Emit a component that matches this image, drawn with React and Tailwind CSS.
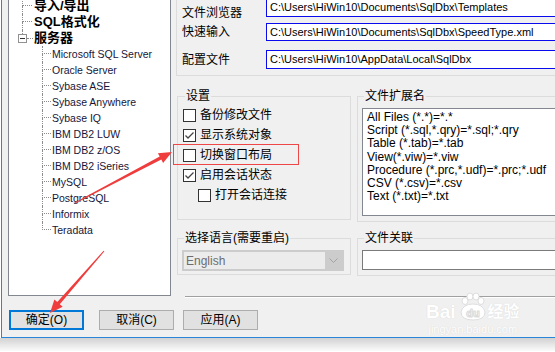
import React from 'react';

const servers = [
  'Microsoft SQL Server',
  'Oracle Server',
  'Sybase ASE',
  'Sybase Anywhere',
  'Sybase IQ',
  'IBM DB2 LUW',
  'IBM DB2 z/OS',
  'IBM DB2 iSeries',
  'MySQL',
  'PostgreSQL',
  'Informix',
  'Teradata',
];

const paths = [
  'C:\\Users\\HiWin10\\Documents\\SqlDbx\\Templates',
  'C:\\Users\\HiWin10\\Documents\\SqlDbx\\SpeedType.xml',
  'C:\\Users\\HiWin10\\AppData\\Local\\SqlDbx',
];

const extensions = [
  'All Files (*.*)=*.*',
  'Script (*.sql,*.qry)=*.sql;*.qry',
  'Table (*.tab)=*.tab',
  'View(*.viw)=*.viw',
  'Procedure (*.prc,*.udf)=*.prc;*.udf',
  'CSV (*.csv)=*.csv',
  'Text (*.txt)=*.txt',
];

// tapered annotation arrow, thin tail -> wide head
function arrowPoints(x1, y1, x2, y2) {
  const len = Math.hypot(x2 - x1, y2 - y1);
  const ux = (x2 - x1) / len;
  const uy = (y2 - y1) / len;
  const px = -uy;
  const py = ux;
  const head = 13;
  const hw = 5.5;
  const sw = 1.7;
  const tw = 0.5;
  const bx = x2 - ux * head;
  const by = y2 - uy * head;
  const pts = [
    [x1 + px * tw, y1 + py * tw],
    [bx + px * sw, by + py * sw],
    [bx + px * hw, by + py * hw],
    [x2, y2],
    [bx - px * hw, by - py * hw],
    [bx - px * sw, by - py * sw],
    [x1 - px * tw, y1 - py * tw],
  ];
  return pts.map((p) => p.map((n) => n.toFixed(1)).join(',')).join(' ');
}

function Elbow({ last, className }) {
  return (
    <div className={`h-[16px] shrink-0 flex flex-col ${className}`}>
      <div className="h-[8px] border-l border-b border-dotted border-[#8c8c8c]" />
      {!last && <div className="h-[8px] border-l border-dotted border-[#8c8c8c]" />}
    </div>
  );
}

function Checkbox({ checked }) {
  return (
    <div className="w-[13px] h-[13px] shrink-0 border border-[#333333] bg-white flex items-center justify-center">
      {checked && (
        <svg width="11" height="11" viewBox="0 0 11 11">
          <polyline points="1.5,5.5 4,8 9.5,2.5" fill="none" stroke="#444" strokeWidth="1.3" />
        </svg>
      )}
    </div>
  );
}

function CheckRow({ checked, label, className = '' }) {
  return (
    <div className={`h-[20px] flex items-center ${className}`}>
      <Checkbox checked={checked} />
      <span className="ml-[4px] text-[12px] leading-[14px]">{label}</span>
    </div>
  );
}

function Group({ title, className, children }) {
  return (
    <fieldset className={`border border-[#dcdcdc] min-w-0 shrink-0 ${className}`}>
      <legend className="ml-[2px] px-[1px] text-[12px] leading-[14px]">{title}</legend>
      {children}
    </fieldset>
  );
}

function Button({ label, primary, className }) {
  return (
    <div
      className={`w-[75px] h-[20px] flex items-center justify-center bg-[#e1e1e1] text-[12px] ${
        primary ? 'border-2 border-[#0078d7]' : 'border border-[#adadad]'
      } ${className}`}
    >
      {label}
    </div>
  );
}

export default function App() {
  return (
    <div className="relative w-[555px] h-[352px] overflow-hidden bg-white text-black font-['Liberation_Sans','Noto_Sans_CJK_SC',sans-serif]">
      <div className="ml-[1px] h-[338px] border-l border-b border-[#2886d8] bg-[#f0f0f0] flex flex-col">
        <div className="flex h-[296px]">
          {/* tree view */}
          <div className="ml-[6px] w-[163px] h-[296px] shrink-0 bg-white border-x border-b border-[#828790] overflow-hidden">
            <div className="-mt-[2px]">
              {['导入/导出', 'SQL格式化'].map((t) => (
                <div key={t} className="h-[16px] flex items-center">
                  <Elbow className="ml-[13px] w-[10px]" />
                  <span className="ml-[2px] text-[13px] font-bold leading-[16px] whitespace-nowrap">{t}</span>
                </div>
              ))}
              <div className="h-[16px] flex">
                <div className="w-[24px] shrink-0 flex flex-col">
                  <div className="ml-[13px] h-[4px] border-l border-dotted border-[#8c8c8c]" />
                  <div className="flex items-center">
                    <div className="ml-[9px] w-[9px] h-[9px] border border-[#919191] flex items-center justify-center">
                      <div className="w-[5px] h-[1px] bg-[#333]" />
                    </div>
                    <div className="w-[6px] border-t border-dotted border-[#8c8c8c]" />
                  </div>
                </div>
                <span className="ml-[1px] text-[13px] font-bold leading-[16px]">服务器</span>
              </div>
              {servers.map((s, i) => (
                <div key={s} className="h-[16px] flex items-center">
                  <Elbow last={i === servers.length - 1} className="ml-[33px] w-[9px]" />
                  <span className="ml-[1px] text-[10.5px] leading-[16px] text-[#16163a] whitespace-nowrap">{s}</span>
                </div>
              ))}
            </div>
          </div>

          {/* settings side */}
          <div className="flex-1 pl-[5px] overflow-hidden">
            <div className="w-[430px]">
              <div className="h-[79px] border-x border-b border-[#dcdcdc] pl-[5px]">
                <div className="-mt-[3px] h-[20px] flex">
                  <div className="w-[84px] shrink-0 pt-[9px] text-[12px] leading-[14px]">文件浏览器</div>
                  <div className="flex-1 h-[20px] border border-[#0a0aee] bg-white pl-[3px] text-[11px] leading-[18px] whitespace-nowrap overflow-hidden">
                    {paths[0]}
                  </div>
                </div>
                <div className="mt-[6px] h-[18px] flex items-center">
                  <div className="w-[84px] shrink-0 text-[12px] leading-[14px]">快速输入</div>
                  <div className="flex-1 h-[18px] border border-[#0a0aee] bg-white pl-[3px] text-[11px] leading-[16px] whitespace-nowrap overflow-hidden">
                    {paths[1]}
                  </div>
                </div>
                <div className="mt-[9px] h-[19px] flex items-center">
                  <div className="w-[84px] shrink-0 text-[12px] leading-[14px]">配置文件</div>
                  <div className="flex-1 h-[19px] border border-[#0a0aee] bg-white pl-[3px] text-[11px] leading-[17px] whitespace-nowrap overflow-hidden">
                    {paths[2]}
                  </div>
                </div>
              </div>

              <div className="mt-[13px] pl-[1px] flex items-start gap-[6px]">
                <Group title="设置" className="w-[174px] h-[131px] pl-[5px]">
                  <div className="pt-[2px]">
                    <CheckRow label="备份修改文件" />
                    <CheckRow checked label="显示系统对象" />
                    <CheckRow label="切换窗口布局" />
                    <CheckRow checked label="启用会话状态" />
                    <CheckRow label="打开会话连接" className="pl-[15px]" />
                  </div>
                </Group>
                <Group title="文件扩展名" className="w-[240px] h-[133px] pl-[4px]">
                  <div className="mt-[5px] h-[108px] border border-[#828790] bg-white pl-[4px] pt-[2px]">
                    {extensions.map((e) => (
                      <div key={e} className="text-[12px] leading-[13.2px] whitespace-nowrap">{e}</div>
                    ))}
                  </div>
                </Group>
              </div>

              <div className="mt-[9px] pl-[1px] flex items-start gap-[6px]">
                <Group title="选择语言(需要重启)" className="w-[174px] h-[44px] pl-[4px]">
                  <div className="mt-[5px] w-[162px] h-[21px] border-2 border-[#cccccc] bg-[#ececec] flex items-center">
                    <span className="pl-[2px] text-[12px] text-[#6d6d6d]">English</span>
                    <div className="ml-auto w-[17px] h-full bg-[#cccccc] flex items-center justify-center">
                      <svg width="9" height="6" viewBox="0 0 9 6">
                        <polyline points="0.5,0.5 4.5,4.5 8.5,0.5" fill="none" stroke="#a3a3a3" strokeWidth="1" />
                      </svg>
                    </div>
                  </div>
                </Group>
                <Group title="文件关联" className="w-[240px] h-[45px] pl-[4px]">
                  <div className="mt-[5px] h-[20px] border border-[#7a7a7a] bg-white" />
                </Group>
              </div>
            </div>
          </div>
        </div>

        <div className="ml-[183px] h-[2px] border-t border-[#a0a0a0] border-b border-b-white" />

        <div className="mt-[12px] flex">
          <Button primary label="确定(O)" className="ml-[7px]" />
          <Button label="取消(C)" className="ml-[15px]" />
          <Button label="应用(A)" className="ml-[9px]" />
        </div>
      </div>
      <div className="h-[13px] bg-gradient-to-b from-[#d2d2d2] to-[#fbfbfb]" />

      {/* annotation overlay */}
      <div className="absolute left-[173px] top-[144px] w-[126px] h-[21px] border border-[#ef4747]" />
      <svg className="absolute left-0 top-0 pointer-events-none" width="555" height="352">
        <polygon points={arrowPoints(75, 203, 172, 152)} fill="#ef3d3d" />
        <polygon points={arrowPoints(104, 251, 50, 313)} fill="#ef3d3d" />
      </svg>

      {/* watermark */}
      <div className="absolute left-[426px] top-[292px] flex flex-col items-center text-white [text-shadow:0_0_1px_#d0d0d0] pointer-events-none">
        <div className="flex items-end h-[30px]">
          <span className="text-[19px] font-bold leading-[20px]">Bai</span>
          <svg width="30" height="30" viewBox="0 0 30 30" className="mx-[1px]">
            <g fill="#ffffff" stroke="#dedede" strokeWidth="1">
              <ellipse cx="8" cy="9" rx="3" ry="3.5" />
              <ellipse cx="13" cy="4.5" rx="3" ry="3.5" />
              <ellipse cx="19" cy="4.5" rx="3" ry="3.5" />
              <ellipse cx="24" cy="9" rx="3" ry="3.5" />
              <path d="M4 20 Q6 12 16 12 Q26 12 28 20 Q28 28 16 28 Q4 28 4 20 Z" />
            </g>
            <text x="16" y="25" textAnchor="middle" fontSize="11" fontWeight="bold" fill="#ffffff" stroke="#d8d8d8" strokeWidth="0.5" fontFamily="Liberation Sans, sans-serif">du</text>
          </svg>
          <span className="text-[16px] font-bold leading-[20px]">经验</span>
        </div>
        <div className="text-[11px] leading-[13px] mt-[1px]">jingyan.baidu.com</div>
      </div>
    </div>
  );
}
